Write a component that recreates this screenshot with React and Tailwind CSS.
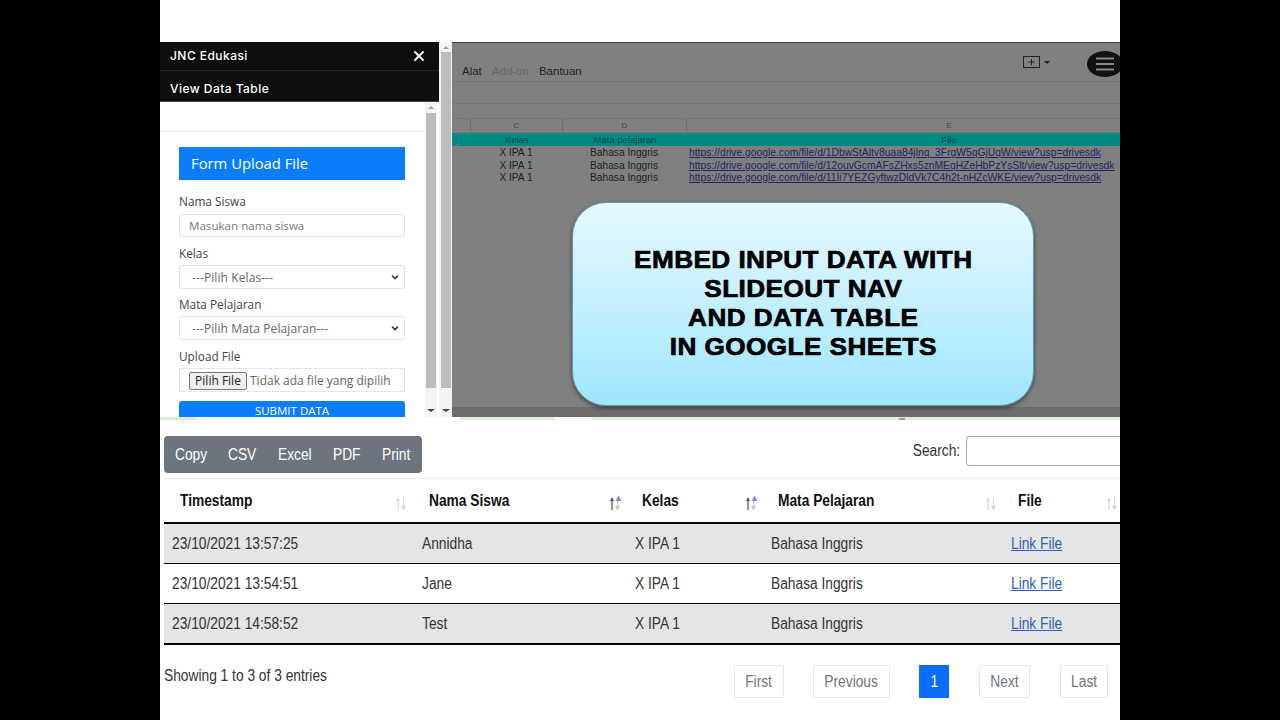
import React from "react";
import { X } from "lucide-react";

const rows = [
  ["23/10/2021 13:57:25", "Annidha", "X IPA 1", "Bahasa Inggris", true, "h-[40px] border-b"],
  ["23/10/2021 13:54:51", "Jane", "X IPA 1", "Bahasa Inggris", false, "h-[40px] border-b"],
  ["23/10/2021 14:58:52", "Test", "X IPA 1", "Bahasa Inggris", true, "h-[41px] border-b-2"],
];

const sheetRows = [
  "https://drive.google.com/file/d/1DbwStAltv8uaa84jlnq_3FrgW5qGjUqW/view?usp=drivesdk",
  "https://drive.google.com/file/d/12ouvGcmAFsZHxs5znMEqHZeHbPzYsSlt/view?usp=drivesdk",
  "https://drive.google.com/file/d/11Ii7YEZGyftwzDldVk7C4h2t-nHZcWKE/view?usp=drivesdk",
];

function N({ children, className = "origin-left" }) {
  return <span className={`inline-block scale-x-[0.86] whitespace-nowrap ${className}`}>{children}</span>;
}

function SortIcon({ active }) {
  return (
    <svg width="16" height="18" viewBox="0 0 16 18" className="mt-[4px] shrink-0">
      <path d="M5 3 L3 7 H4.4 V16 H5.6 V7 H7 Z" fill={active ? "#555" : "#d8d8d8"} />
      <path d="M10.5 14 V3 M10.5 16 L8.5 12 H12.5 Z" stroke={active ? "#ccc" : "#d8d8d8"} strokeWidth="1" fill={active ? "#ccc" : "#d8d8d8"} />
      {active && <path d="M8.5 7 L11.5 1.5 L14.5 7 Z" fill="#7f8fc4" />}
    </svg>
  );
}

function Th({ w, pl, children, active }) {
  return (
    <div className={`${w} ${pl} flex items-center justify-between text-[16px] font-bold text-[#111]`}>
      <N>{children}</N>
      <SortIcon active={active} />
    </div>
  );
}

function FormLabel({ children }) {
  return <div className="mb-[4px] text-[11.8px] leading-[16px] text-[#444]">{children}</div>;
}

function SelectBox({ children }) {
  return (
    <div className="flex h-[24px] items-center justify-between rounded-[3px] border border-[#dfe2e6] bg-white pl-[12px] pr-[4px] text-[12px] tracking-[0.1px] text-[#666]">
      <span className="pt-[1px]">{children}</span>
      <svg width="10" height="10" viewBox="0 0 10 10"><path d="M2 3.5 L5 6.5 L8 3.5" fill="none" stroke="#333" strokeWidth="1.6" /></svg>
    </div>
  );
}

function Scrollbar({ className, top }) {
  return (
    <div className={`flex flex-col items-center bg-[#f4f4f4] ${className}`}>
      <div className={`flex ${top} items-center`}><div className="border-x-[3px] border-b-[3px] border-x-transparent border-b-[#a0a0a0]" /></div>
      <div className="w-[10px] flex-1 bg-[#bcbcbc]" />
      <div className="flex h-[29px] items-end justify-center pb-[5px]"><div className="border-x-[4px] border-t-[3px] border-x-transparent border-t-[#404040]" /></div>
    </div>
  );
}

export default function App() {
  return (
    <div className="flex h-[720px] w-[1280px] overflow-hidden bg-black font-['Liberation_Sans',sans-serif]">
      <div className="w-[160px] shrink-0" />
      <main className="flex w-[960px] shrink-0 flex-col overflow-hidden bg-white">
        <div className="h-[42px] shrink-0" />
        <section className="flex h-[375px] shrink-0">
          <aside className="flex w-[292px] shrink-0 font-['Open_Sans','Noto_Sans',sans-serif]">
            <div className="flex w-[279px] shrink-0 flex-col">
              <div className="h-[60px] shrink-0 border-b border-[#444] bg-[#0e0e0e] font-['Inter',sans-serif] text-[12px] font-medium tracking-[0.45px] text-white">
                <div className="flex h-[29px] items-center justify-between border-b border-[#222] pl-[10px] pr-[12px]">
                  <span>JNC Edukasi</span>
                  <X size={16} strokeWidth={3} />
                </div>
                <div className="flex h-[30px] items-center pl-[10px] pt-[5px]">View Data Table</div>
              </div>
              <div className="flex min-h-0 flex-1">
                <div className="w-[265px] shrink-0 overflow-hidden">
                  <div className="mt-[29px] w-[265px] border-t border-[#eee] pl-[19px] pt-[15px]">
                    <div className="flex h-[33px] w-[226px] items-center bg-[#0b7dfb] pl-[12px] text-[14.8px] text-white">Form Upload File</div>
                  </div>
                  <div className="w-[245px] pl-[19px] pt-[13px]">
                    <div className="w-[226px]">
                      <div className="pb-[1px]"><FormLabel>Nama Siswa</FormLabel></div>
                      <div className="flex h-[23px] items-center rounded-[3px] border border-[#dfe2e6] pl-[9px] text-[11.6px] text-[#777]">Masukan nama siswa</div>
                      <div className="mt-[8px]"><FormLabel>Kelas</FormLabel></div>
                      <SelectBox>---Pilih Kelas---</SelectBox>
                      <div className="mt-[7px]"><FormLabel>Mata Pelajaran</FormLabel></div>
                      <SelectBox>---Pilih Mata Pelajaran---</SelectBox>
                      <div className="mt-[8px]"><FormLabel>Upload File</FormLabel></div>
                      <div className="flex h-[24px] items-center border border-[#e3e5e8] pl-[9px] pt-[2px] text-[12px] text-[#666]">
                        <div className="flex h-[18px] w-[58px] items-center justify-center rounded-[2px] border border-[#777] bg-[#efefef] text-[#222]">Pilih File</div>
                        <span className="ml-[3px]">Tidak ada file yang dipilih</span>
                      </div>
                      <div className="mt-[9px] flex h-[16px] items-start justify-center rounded-t-[3px] bg-[#0b7dfb] pt-[4px] text-[11.5px] leading-[12px] text-white">SUBMIT DATA</div>
                    </div>
                  </div>
                </div>
                <Scrollbar className="w-[12px] shrink-0" top="h-[11px]" />
                <div className="w-[2px] shrink-0 bg-white" />
              </div>
            </div>
            <Scrollbar className="w-[13px] shrink-0" top="h-[10px]" />
          </aside>
          <div className="relative min-w-0 flex-1 overflow-hidden border-t border-[#444] bg-[#808080]">
            <div className="flex h-[39px] items-end gap-[10px] border-b border-[#777] pb-[3px] pl-[10px] text-[11.5px] leading-[13px] text-[#222]">
              <span>Alat</span><span className="text-[#666]">Add-on</span><span>Bantuan</span>
            </div>
            <div className="h-[22px] border-b border-[#777]" />
            <div className="h-[15px] border-b border-[#777]" />
            <div className="flex h-[14px] text-center text-[8px] leading-[14px] text-[#444]">
              <div className="w-[19px] shrink-0 border-r border-[#6e6e6e]" />
              <div className="w-[92px] shrink-0 border-r border-[#6e6e6e]">C</div>
              <div className="w-[124px] shrink-0 border-r border-[#6e6e6e]">D</div>
              <div className="w-[524px] shrink-0">E</div>
            </div>
            <div className="flex h-[13px] bg-[#008a84] text-center text-[9.5px] leading-[13px] text-[#004a48]">
              <div className="w-[19px] shrink-0" />
              <div className="w-[92px] shrink-0">Kelas</div>
              <div className="w-[124px] shrink-0">Mata pelajaran</div>
              <div className="w-[524px] shrink-0">File</div>
            </div>
            <div className="pt-[1px]">
              {sheetRows.map((u) => (
                <div key={u} className="flex h-[12.5px] text-center text-[10.2px] leading-[12.5px] text-[#1c1c1c]">
                  <div className="w-[18px] shrink-0" />
                  <div className="w-[92px] shrink-0">X IPA 1</div>
                  <div className="w-[124px] shrink-0">Bahasa Inggris</div>
                  <div className="flex-1 whitespace-nowrap pl-[3px] text-left text-[10.3px] text-[#20245e] underline">{u}</div>
                </div>
              ))}
            </div>
            <div className="absolute inset-x-0 bottom-0 h-[10px] bg-[#6c6c6c]" />
            <div className="absolute left-[635px] top-[8px] flex h-[26px] w-[36px] items-center justify-center rounded-[50%] bg-[#111]">
              <svg width="20" height="14" viewBox="0 0 20 14"><path d="M1 1.5 H19 M1 7 H19 M1 12.5 H19" stroke="#8a8a8a" strokeWidth="2" /></svg>
            </div>
            <div className="absolute left-[571px] top-[13px] flex items-center gap-[4px]">
              <svg width="17" height="12" viewBox="0 0 17 12"><rect x="0.5" y="0.5" width="16" height="11" fill="none" stroke="#222" /><path d="M8.5 3 V9 M5.5 6 H11.5" fill="none" stroke="#222" /></svg>
              <div className="border-x-[3px] border-t-[3px] border-x-transparent border-t-[#222]" />
            </div>
            <div className="absolute left-[120px] top-[159px] flex h-[204px] w-[462px] items-center justify-center rounded-[34px] border border-[#5d9aa8] bg-gradient-to-b from-[#e6f9ff] to-[#9fe6ff] pb-[2px] text-center text-[24px] font-bold leading-[29px] tracking-[0.4px] text-black shadow-[0_2px_4px_rgba(0,0,0,0.5)] [-webkit-text-stroke:0.7px_black]">
              <div className="scale-x-[1.09] whitespace-nowrap">EMBED INPUT DATA WITH<br />SLIDEOUT NAV<br />AND DATA TABLE<br />IN GOOGLE SHEETS</div>
            </div>
          </div>
        </section>
        <div className="relative flex h-[3px] shrink-0">
          <div className="w-[36px] bg-[#e0ecd9]" />
          <div className="w-[264px] bg-white" />
          <div className="w-[95px] bg-[#e0ecd9]" />
          <div className="w-[37px] bg-white" />
          <div className="flex-1 bg-[#e0ecd9]" />
          <div className="absolute left-[739px] top-[1px] h-[2px] w-[6px] bg-[#999]" />
        </div>
        <section className="flex min-h-0 flex-1 flex-col pl-[4px] text-[16px] text-[#333]">
          <div className="flex h-[59px] shrink-0 items-start justify-between border-b border-[#eee] pt-[16px]">
            <div className="flex h-[37px] w-[258px] items-center gap-[21px] rounded-[4px] bg-[#6c757d] pl-[11px] text-white">
              <span className="w-[32px]"><N>Copy</N></span>
              <span className="w-[29px]"><N>CSV</N></span>
              <span className="w-[34px]"><N>Excel</N></span>
              <span className="w-[28px]"><N>PDF</N></span>
              <span className="w-[29px]"><N>Print</N></span>
            </div>
            <div className="flex items-center gap-[6px]">
              <N className="origin-right">Search:</N>
              <div className="h-[30px] w-[154px] rounded-l-[4px] border border-r-0 border-[#aaa]" />
            </div>
          </div>
          <div className="flex h-[45px] shrink-0 items-center border-b-2 border-black">
            <Th w="w-[245px]" pl="pl-[16px]">Timestamp</Th>
            <Th w="w-[214px]" pl="pl-[20px]" active>Nama Siswa</Th>
            <Th w="w-[136px]" pl="pl-[19px]" active>Kelas</Th>
            <Th w="w-[240px]" pl="pl-[19px]">Mata Pelajaran</Th>
            <Th w="w-[121px]" pl="pl-[19px]">File</Th>
          </div>
          {rows.map(([t, n, k, m, shade, h]) => (
            <div key={t} className={`flex shrink-0 items-center border-black ${h} ${shade ? "bg-[#e5e5e5]" : "bg-white"}`}>
              <div className="w-[258px] pl-[8px]"><N>{t}</N></div>
              <div className="w-[213px]"><N>{n}</N></div>
              <div className="w-[136px]"><N>{k}</N></div>
              <div className="w-[240px]"><N>{m}</N></div>
              <div className="text-[#2b63b8]"><N className="origin-left underline">Link File</N></div>
            </div>
          ))}
          <div className="flex min-h-0 flex-1 items-start justify-between pr-[12px] pt-[20px]">
            <N className="mt-[-1px] origin-left">Showing 1 to 3 of 3 entries</N>
            <div className="flex items-center text-[#6c757d]">
              <div className="flex h-[33px] w-[50px] items-center justify-center rounded-[2px] border border-[#e8e8e8]"><N className="origin-center">First</N></div>
              <div className="ml-[29px] flex h-[33px] w-[77px] items-center justify-center rounded-[2px] border border-[#e8e8e8]"><N className="origin-center">Previous</N></div>
              <div className="ml-[29px] flex h-[33px] w-[30px] items-center justify-center bg-[#0d6efd] text-white"><N className="origin-center">1</N></div>
              <div className="ml-[30px] flex h-[33px] w-[51px] items-center justify-center rounded-[2px] border border-[#e8e8e8]"><N className="origin-center">Next</N></div>
              <div className="ml-[30px] flex h-[33px] w-[48px] items-center justify-center rounded-[2px] border border-[#e8e8e8]"><N className="origin-center">Last</N></div>
            </div>
          </div>
        </section>
      </main>
      <div className="w-[160px] shrink-0" />
    </div>
  );
}
